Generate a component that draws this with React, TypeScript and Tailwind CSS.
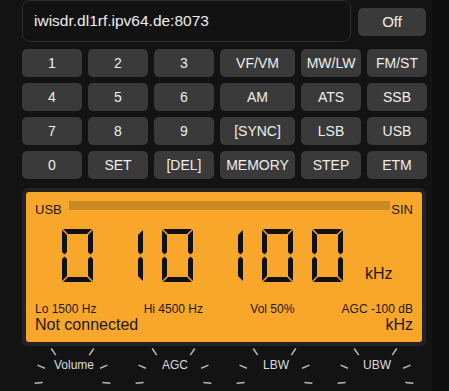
import React from 'react'

const keys = [
  ['1', '2', '3', 'VF/VM', 'MW/LW', 'FM/ST'],
  ['4', '5', '6', 'AM', 'ATS', 'SSB'],
  ['7', '8', '9', '[SYNC]', 'LSB', 'USB'],
  ['0', 'SET', '[DEL]', 'MEMORY', 'STEP', 'ETM'],
]

const SEGMENTS: Record<string, string> = {
  '0': 'abcdef',
  '1': 'bc',
  '2': 'abged',
  '3': 'abgcd',
  '4': 'fgbc',
  '5': 'afgcd',
  '6': 'afgedc',
  '7': 'abc',
  '8': 'abcdefg',
  '9': 'abcdfg',
}

// 7-segment glyph, 31x53
function Digit({ value }: { value: string }) {
  const W = 31
  const H = 53
  const t = 5
  const g = 1
  const m = H / 2
  const polys: Record<string, string> = {
    a: `${g},0 ${W - g},0 ${W - g - t},${t} ${g + t},${t}`,
    d: `${g},${H} ${W - g},${H} ${W - g - t},${H - t} ${g + t},${H - t}`,
    f: `0,${g} ${t},${t + g} ${t},${m - t / 2 - g} ${t / 2},${m - g} 0,${m - t / 2 - g}`,
    e: `0,${H - g} ${t},${H - t - g} ${t},${m + t / 2 + g} ${t / 2},${m + g} 0,${m + t / 2 + g}`,
    b: `${W},${g} ${W - t},${t + g} ${W - t},${m - t / 2 - g} ${W - t / 2},${m - g} ${W},${m - t / 2 - g}`,
    c: `${W},${H - g} ${W - t},${H - t - g} ${W - t},${m + t / 2 + g} ${W - t / 2},${m + g} ${W},${m + t / 2 + g}`,
    g: `${t / 2 + g},${m} ${t + g},${m - t / 2} ${W - t - g},${m - t / 2} ${W - t / 2 - g},${m} ${W - t - g},${m + t / 2} ${t + g},${m + t / 2}`,
  }
  const on = SEGMENTS[value] ?? ''
  return (
    <svg width={W} height={H} viewBox={`0 0 ${W} ${H}`} aria-hidden="true">
      {on.split('').map((s) => (
        <polygon key={s} points={polys[s]} fill="#111" />
      ))}
    </svg>
  )
}

function Knob({ label }: { label: string }) {
  const cx = 50.5
  const cy = 34
  const angles = [-95, -67, -34, 34, 67, 95]
  return (
    <div className="relative h-[45px]">
      <svg width="101" height="45" className="absolute left-0 top-0">
        {angles.map((a) => {
          const r = (a * Math.PI) / 180
          const x1 = cx + 30 * Math.sin(r)
          const y1 = cy - 30 * Math.cos(r)
          const x2 = cx + 38 * Math.sin(r)
          const y2 = cy - 38 * Math.cos(r)
          return <line key={a} x1={x1} y1={y1} x2={x2} y2={y2} stroke="#b8b8b8" strokeWidth="1.5" />
        })}
      </svg>
      <div className="absolute left-[3px] right-0 top-[12px] text-center text-[12px] leading-[14px] text-[#dddddd]">
        {label}
      </div>
    </div>
  )
}

export default function App() {
  const freq = '010100'

  return (
    <div className="flex min-h-screen bg-[#0e0e0e] font-['Liberation_Sans',Arial,sans-serif]">
      <div className="w-[432px] h-[391px] overflow-hidden bg-[#131313] pl-[22px] pr-[6px]">
        {/* header */}
        <div className="flex gap-[7px]">
          <div className="flex h-[42px] w-[329px] items-center rounded-lg border border-[#2e2e2e] bg-[#121212] pl-[11px] text-[15.5px] text-[#eeeeee]">
            iwisdr.dl1rf.ipv64.de:8073
          </div>
          <button className="mt-[8px] h-[28px] w-[68px] rounded-[5px] bg-[#3a3a3a] text-[15px] text-[#eeeeee]">
            Off
          </button>
        </div>

        {/* keypad */}
        <div className="mt-[7px] grid grid-cols-[60px_60px_60px_75px_60px_60px] gap-[6px]">
          {keys.flat().map((k) => (
            <button
              key={k}
              className="h-[28px] rounded-[5px] bg-[#3a3a3a] text-[14px] text-[#eeeeee]"
            >
              {k}
            </button>
          ))}
        </div>

        {/* lcd */}
        <div className="mt-[9px] w-[404px] rounded-md bg-[#202226] p-[4px]">
          <div className="rounded-[3px] bg-[#f8a72a] px-[9px] pt-[9px] pb-[8px] text-[#1a1a1a]">
            <div className="flex h-[15px] items-start">
              <span className="mt-[2px] text-[13px] leading-[13px]">USB</span>
              <div className="ml-[7px] h-[9px] flex-1 bg-[#c98a26]" />
              <span className="ml-[1px] mt-[2px] text-[13px] leading-[13px]">SIN</span>
            </div>

            <div className="mt-[13px] flex h-[53px] items-end pl-[27px]">
              <div role="img" aria-label={freq} className="flex gap-[19px]">
                {freq.split('').map((d, i) => (
                  <Digit key={i} value={d} />
                ))}
              </div>
              <span className="ml-[22px] text-[16px] leading-[16px]">kHz</span>
            </div>

            <div className="mt-[20px] flex justify-between text-[12px] leading-[14px]">
              <span>Lo 1500 Hz</span>
              <span>Hi 4500 Hz</span>
              <span>Vol 50%</span>
              <span>AGC -100 dB</span>
            </div>
            <div className="flex justify-between text-[16px] leading-[18px]">
              <span>Not connected</span>
              <span>kHz</span>
            </div>
          </div>
        </div>

        {/* knobs */}
        <div className="grid w-[404px] grid-cols-4">
          {['Volume', 'AGC', 'LBW', 'UBW'].map((l) => (
            <Knob key={l} label={l} />
          ))}
        </div>
      </div>
    </div>
  )
}
